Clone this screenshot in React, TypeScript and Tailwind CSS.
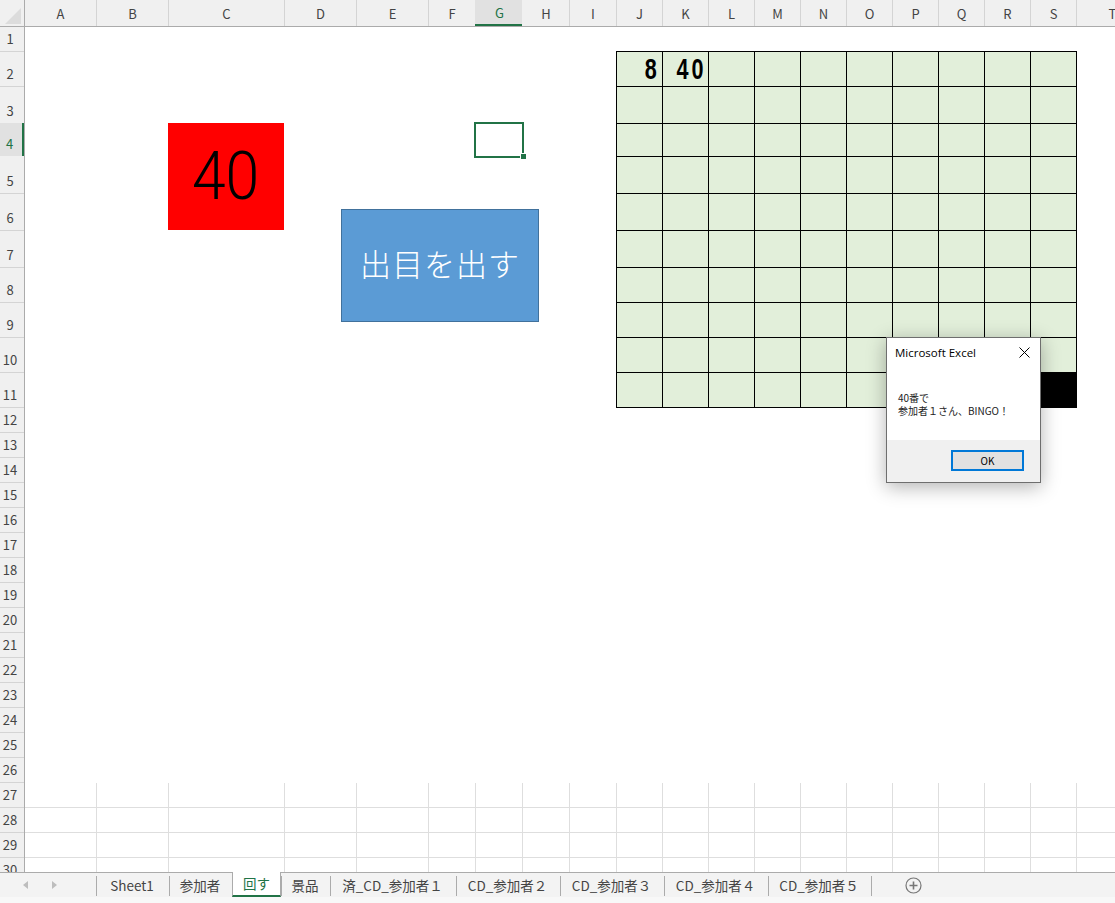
import React from 'react';

const COLS = ['A', 'B', 'C', 'D', 'E', 'F', 'G', 'H', 'I', 'J', 'K', 'L', 'M', 'N', 'O', 'P', 'Q', 'R', 'S', 'T'];
const ROWS = Array.from({ length: 30 }, (_, i) => i + 1);
const TABS = [
  { name: 'Sheet1', width: 'w-[73px]' },
  { name: '参加者', width: 'w-[63px]' },
  { name: '回す', width: 'w-[49px]', active: true },
  { name: '景品', width: 'w-[49px]' },
  { name: '済_CD_参加者１', width: 'w-[126px]' },
  { name: 'CD_参加者２', width: 'w-[104px]' },
  { name: 'CD_参加者３', width: 'w-[104px]' },
  { name: 'CD_参加者４', width: 'w-[104px]' },
  { name: 'CD_参加者５', width: 'w-[103px]' },
];

// same column and row tracks are used by the headers and the sheet
const colTracks =
  'grid-cols-[72px_72px_116px_72px_72px_47px_47px_47px_47px_46px_46px_46px_46px_46px_46px_46px_46px_46px_46px_72px]';
const rowTracks =
  'grid-rows-[25px_35px_37px_33px_37px_37px_37px_35px_35px_35px_35px_repeat(19,25px)]';

function ColumnHeader() {
  return (
    <div className="flex h-[27px] shrink-0 border-b border-[#ababab] bg-[#f0f0f0]">
      <div className="flex w-[25px] shrink-0 items-end justify-end border-r border-[#ababab] pb-[2px] pr-[3px]">
        <div className="h-0 w-0 border-b-[16px] border-l-[16px] border-b-[#dcdcdc] border-l-transparent" />
      </div>
      <div className={`grid ${colTracks}`}>
        {COLS.map((c) => (
          <div
            key={c}
            className={
              c === 'G'
                ? '-ml-px mr-px flex items-center justify-center border-b-2 border-[#217346] bg-[#e1e1e1] pl-[2px] text-[#217346]'
                : 'flex items-center justify-center border-r border-[#d4d4d4] text-[#444444]'
            }
          >
            {c}
          </div>
        ))}
      </div>
    </div>
  );
}

function RowHeader() {
  return (
    <div className={`grid w-[25px] shrink-0 ${rowTracks} border-r border-[#ababab] bg-[#f0f0f0]`}>
      {ROWS.map((r) => (
        <div
          key={r}
          className={
            r === 4
              ? '-mt-px mb-px flex items-end justify-center border-r-2 border-[#217346] bg-[#e1e1e1] pb-[6px] pr-[3px] text-[#217346]'
              : 'flex items-end justify-center border-b border-[#d4d4d4] pb-[6px] pr-[4px] text-[#444444]'
          }
        >
          {r}
        </div>
      ))}
    </div>
  );
}

function BingoTable() {
  const cells = Array.from({ length: 100 }, (_, i) => i);
  return (
    <div className="col-start-10 col-span-10 row-start-2 row-span-10 -ml-px -mt-px grid grid-cols-[46px_46px_46px_46px_46px_46px_46px_46px_46px_46px] grid-rows-[35px_37px_33px_37px_37px_37px_35px_35px_35px_35px] border-l border-t border-black">
      {cells.map((i) => (
        <div
          key={i}
          className={`flex items-center justify-end border-b border-r border-black pr-[2px] ${
            i === 99 ? 'bg-black' : 'bg-[#e2efda]'
          }`}
        >
          {i === 0 && (
            <span className="origin-right scale-x-[0.72] font-['Liberation_Sans',sans-serif] text-[30px] font-bold leading-none tracking-[4px] text-black">
              8
            </span>
          )}
          {i === 1 && (
            <span className="origin-right scale-x-[0.72] font-['Liberation_Sans',sans-serif] text-[30px] font-bold leading-none tracking-[4px] text-black">
              40
            </span>
          )}
        </div>
      ))}
    </div>
  );
}

function Sheet() {
  return (
    <div className="relative min-w-0 flex-1 overflow-hidden bg-white">
      <div className={`grid ${colTracks} ${rowTracks}`}>
        <BingoTable />
        {/* gridlines only come back from row 27 down */}
        <div className={`col-span-full row-start-[27] row-span-4 grid ${colTracks} grid-rows-[25px_25px_25px_25px]`}>
          {[27, 28, 29, 30].map((r) =>
            COLS.map((c) => (
              <div key={`${c}${r}`} className="border-b border-r border-[#dedede]" />
            ))
          )}
        </div>
      </div>

      <div className="absolute left-[143px] top-[96px] flex h-[107px] w-[116px] items-center justify-center bg-[#ff0000] font-['Roboto',sans-serif] text-[66px] font-light text-black">
        <span className="scale-x-[0.92]">40</span>
      </div>

      <div className="absolute left-[316px] top-[182px] flex h-[113px] w-[198px] items-center justify-center border border-[#41719c] bg-[#5b9bd5] pb-[7px] font-['Noto_Sans_CJK_JP',sans-serif] text-[31px] font-light tracking-[1px] text-white">
        出目を出す
      </div>

      <div className="absolute left-[449px] top-[95px] h-[36px] w-[50px] border-2 border-[#217346]" />
      <div className="absolute left-[495px] top-[126px] h-[6px] w-[6px] border-l border-t border-white bg-[#217346]" />
    </div>
  );
}

function SheetTabs() {
  return (
    <div className="flex h-[31px] shrink-0 flex-col border-t border-[#ababab] bg-[#f8f8f8]">
      <div className="flex h-[24px] items-stretch bg-[#f3f3f3] text-[13.5px] text-[#444444]">
        <div className="flex w-[96px] items-center gap-[20px] pl-[22px]">
          <svg width="8" height="10" viewBox="0 0 8 10">
            <path d="M6 1 L1 5 L6 9 Z" fill="#bdbdbd" />
          </svg>
          <svg width="8" height="10" viewBox="0 0 8 10">
            <path d="M2 1 L7 5 L2 9 Z" fill="#bdbdbd" />
          </svg>
        </div>
        {TABS.map((t) =>
          t.active ? (
            <div
              key={t.name}
              className={`${t.width} -mt-px flex items-center justify-center border-x border-b-2 border-x-[#ababab] border-b-[#217346] bg-white text-[#217346]`}
            >
              {t.name}
            </div>
          ) : (
            <div key={t.name} className={`${t.width} flex items-center pb-px pt-[3px]`}>
              <div className="flex h-full w-full items-center justify-center border-l border-[#ababab] pr-[2px]">
                {t.name}
              </div>
            </div>
          )
        )}
        <div className="mb-px mt-[3px] border-l border-[#ababab]" />
        <div className="ml-[33px] flex items-center">
          <svg width="17" height="17" viewBox="0 0 17 17" fill="none" stroke="#777777">
            <circle cx="8.5" cy="8.5" r="7.5" strokeWidth="1.2" />
            <path d="M8.5 4.5 V12.5 M4.5 8.5 H12.5" strokeWidth="1.6" />
          </svg>
        </div>
      </div>
    </div>
  );
}

function MessageBox() {
  return (
    <div className="absolute left-[886px] top-[337px] flex h-[146px] w-[155px] flex-col border border-[#6e6e6e] bg-white font-['Noto_Sans_CJK_JP',sans-serif] text-black shadow-[0_4px_18px_rgba(0,0,0,0.3)]">
      <div className="flex h-[29px] items-center justify-between pl-[8px] pr-[10px]">
        <span className="font-['Open_Sans',sans-serif] text-[11.5px]">Microsoft Excel</span>
        <svg width="11" height="11" viewBox="0 0 11 11" stroke="#000000" strokeWidth="1">
          <path d="M0.5 0.5 L10.5 10.5 M10.5 0.5 L0.5 10.5" />
        </svg>
      </div>
      <div className="flex-1 pl-[11px] pt-[24px] text-[10px] leading-[13px] text-[#222222]">
        <div>40番で</div>
        <div>参加者１さん、BINGO！</div>
      </div>
      <div className="flex h-[42px] items-start justify-end bg-[#f0f0f0] pr-[16px] pt-[10px]">
        <button className="flex h-[21px] w-[73px] items-center justify-center border-2 border-[#0078d7] bg-[#e1e1e1] text-[10px] text-black">
          OK
        </button>
      </div>
    </div>
  );
}

export default function App() {
  return (
    <div className="relative flex h-[903px] w-[1115px] flex-col overflow-hidden bg-white font-['Noto_Sans_CJK_JP',sans-serif] text-[13px] leading-none">
      <ColumnHeader />
      <div className="flex min-h-0 flex-1">
        <RowHeader />
        <Sheet />
      </div>
      <SheetTabs />
      <MessageBox />
    </div>
  );
}
